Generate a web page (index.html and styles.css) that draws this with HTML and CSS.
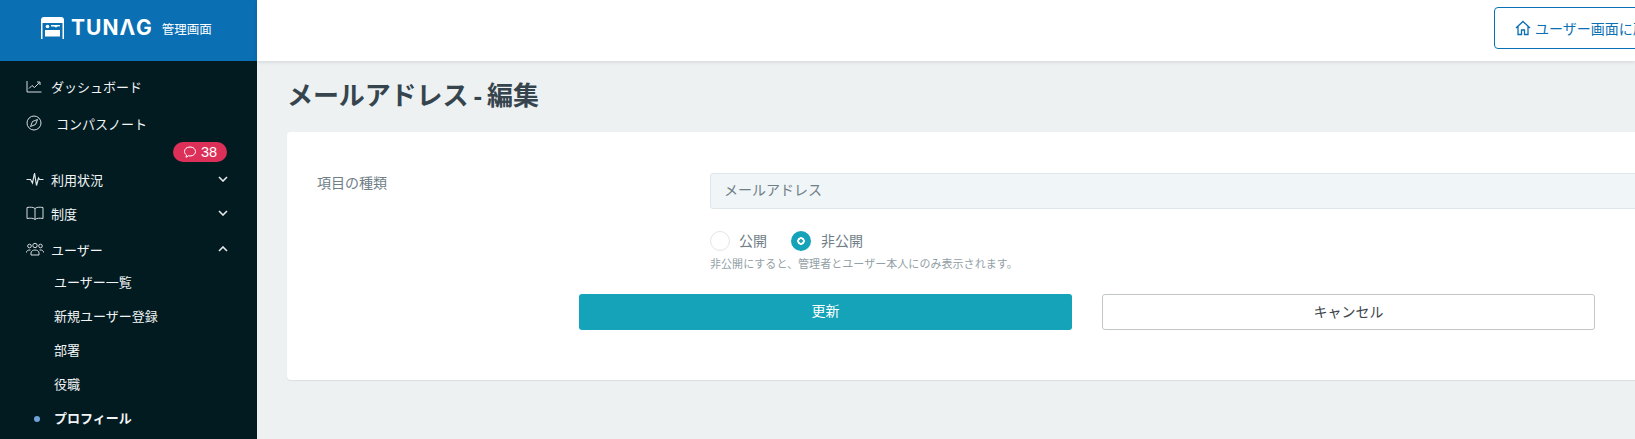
FILE: index.html
```html
<!DOCTYPE html>
<html lang="ja">
<head>
	<title>メールアドレス - 編集</title>
	<meta charset="UTF-8">
	<link rel="stylesheet" href="styles.css">
</head>
<body>
	<div class="layout">
		<aside class="sidebar">
			<div class="brand">
				<svg class="brand-icon" viewBox="0 0 23 22" width="23" height="22">
					<path d="M0 22V3Q0 0 3 0H20Q23 0 23 3V22H21.5V6H1.5V22Z" fill="#fff"/>
					<circle cx="6.5" cy="9.5" r="1.8" fill="#fff"/>
					<path d="M10 8H19V9.5L17 9.2L15 10.5L13 9.5H10Z" fill="#fff"/>
					<rect x="4" y="13" width="15" height="6.5" fill="#fff"/>
				</svg>
				<span class="brand-name">TUNΛG</span>
				<span class="brand-sub">管理画面</span>
			</div>
			<nav class="nav">
				<a class="nav-item">
					<svg class="nav-icon" viewBox="0 0 16 16" fill="none" stroke="#d5dcde" stroke-width="1">
						<path d="M1 3V14H15.5"/>
						<path d="M3 10.5L6 7.5L8.5 9.5L13.5 4.5M11 4H14V7"/>
					</svg>
					<span>ダッシュボード</span>
				</a>
				<a class="nav-item nav-compass">
					<svg class="nav-icon" viewBox="0 0 16 16" fill="none" stroke="#d5dcde" stroke-width="1">
						<circle cx="8" cy="8" r="7"/>
						<path d="M11.5 4.5L9.5 9.5L4.5 11.5L6.5 6.5Z"/>
					</svg>
					<span>コンパスノート</span>
				</a>
				<div class="badge-row">
					<span class="badge">
						<svg viewBox="0 0 14 14" width="14" height="14" fill="none" stroke="#fff" stroke-width="1">
							<path d="M7 2C3.7 2 1.5 4 1.5 6.5C1.5 8 2.3 9.2 3.5 10L3 12.3L5.6 10.8C6 10.9 6.5 11 7 11C10.3 11 12.5 9 12.5 6.5C12.5 4 10.3 2 7 2Z"/>
						</svg>
						38
					</span>
				</div>
				<a class="nav-item">
					<svg class="nav-icon nav-icon-wide" viewBox="0 0 18 16" fill="none" stroke="#e3e8ea" stroke-width="1.2">
						<path d="M0.5 8.5H4.5L6.5 12L8.5 2L10.5 14.5L12.5 7L13.5 8.5H17.5"/>
					</svg>
					<span>利用状況</span>
					<svg class="chevron" viewBox="0 0 10 6" fill="none" stroke="#e6eaeb" stroke-width="1.6"><path d="M1 1L5 5L9 1"/></svg>
				</a>
				<a class="nav-item">
					<svg class="nav-icon nav-icon-wide" viewBox="0 0 18 16" fill="none" stroke="#d5dcde" stroke-width="1">
						<path d="M9 3.5C7.5 2 4 2 1 2.5V13.5C4 13 7.5 13 9 14.5C10.5 13 14 13 17 13.5V2.5C14 2 10.5 2 9 3.5ZM9 3.5V14.5"/>
					</svg>
					<span>制度</span>
					<svg class="chevron" viewBox="0 0 10 6" fill="none" stroke="#e6eaeb" stroke-width="1.6"><path d="M1 1L5 5L9 1"/></svg>
				</a>
				<a class="nav-item nav-users">
					<svg class="nav-icon nav-icon-wide" viewBox="0 0 18 16" fill="none" stroke="#d5dcde" stroke-width="1">
						<circle cx="3.5" cy="5" r="1.8"/>
						<circle cx="9" cy="4.5" r="2.2"/>
						<circle cx="14.5" cy="5" r="1.8"/>
						<path d="M0.5 11.5C0.5 9.5 2 8.8 4.5 9M17.5 11.5C17.5 9.5 16 8.8 13.5 9M5 14V12C5 10 7 9 9 9C11 9 13 10 13 12V14Z"/>
					</svg>
					<span>ユーザー</span>
					<svg class="chevron" viewBox="0 0 10 6" fill="none" stroke="#e6eaeb" stroke-width="1.6"><path d="M1 5L5 1L9 5"/></svg>
				</a>
				<a class="nav-sub">ユーザー一覧</a>
				<a class="nav-sub">新規ユーザー登録</a>
				<a class="nav-sub">部署</a>
				<a class="nav-sub">役職</a>
				<a class="nav-sub current">プロフィール</a>
			</nav>
		</aside>
		<div class="main">
			<header class="topbar">
				<a class="back-btn">
					<svg viewBox="0 0 16 16" width="16" height="16" fill="none" stroke="#0a6fb3" stroke-width="1.3">
						<path d="M1 8L8 1.5L15 8M3 6.5V14.5H6.5V10H9.5V14.5H13V6.5"/>
					</svg>
					ユーザー画面に戻る
				</a>
			</header>
			<div class="content">
				<h1 class="page-title">メールアドレス - 編集</h1>
				<div class="card">
					<div class="form-row">
						<div class="form-label">項目の種類</div>
						<div class="form-control">
							<div class="readonly-input">メールアドレス</div>
							<div class="radios">
								<label class="radio"><span class="radio-mark"></span>公開</label>
								<label class="radio"><span class="radio-mark on"></span>非公開</label>
							</div>
							<p class="help">非公開にすると、管理者とユーザー本人にのみ表示されます。</p>
						</div>
					</div>
					<div class="actions">
						<a class="btn btn-primary">更新</a>
						<a class="btn btn-cancel">キャンセル</a>
					</div>
				</div>
			</div>
		</div>
	</div>
</body>
</html>
```

FILE: styles.css
```css
* {
	box-sizing: border-box;
}
html, body {
	height: 100%;
}
body {
	margin: 0;
	overflow: hidden;
	background: #edf1f2;
	font-family: "Liberation Sans", "Noto Sans CJK JP", sans-serif;
	color: #36454d;
}
.layout {
	display: flex;
	height: 439px;
	overflow: hidden;
}

/* sidebar */
.sidebar {
	width: 257px;
	flex: none;
	background: #021b21;
	color: #f1f4f5;
}
.brand {
	height: 61px;
	background: #0a6fb3;
	color: #fff;
	display: flex;
	align-items: center;
	padding: 0 0 5px 41px;
}
.brand-icon {
	display: block;
}
.brand-name {
	font-family: "Inter", sans-serif;
	font-weight: 700;
	font-size: 21px;
	letter-spacing: 1px;
	margin-left: 7px;
	line-height: 22px;
}
.brand-sub {
	font-size: 12.5px;
	margin-left: 9px;
}
.nav {
	padding-top: 8px;
	font-size: 13px;
}
.nav-item {
	height: 34px;
	display: flex;
	align-items: center;
	padding: 0 29px 0 26px;
}
.nav-compass {
	height: 40px;
}
.nav-compass span {
	margin-left: 5px;
}
.nav-users {
	margin-top: 2px;
}
.nav-icon {
	width: 16px;
	height: 16px;
	margin-right: 9px;
	flex: none;
}
.nav-icon-wide {
	width: 18px;
	margin-right: 7px;
}
.nav-item .chevron {
	width: 10px;
	height: 6px;
	margin-left: auto;
}
.badge-row {
	height: 20px;
	margin-top: -1px;
	display: flex;
	justify-content: flex-end;
	padding-right: 30px;
}
.badge {
	width: 54px;
	height: 20px;
	border-radius: 10px;
	background: #dd3059;
	color: #fff;
	font-size: 14.5px;
	display: flex;
	align-items: center;
	justify-content: center;
	gap: 4px;
}
.nav-sub {
	display: block;
	height: 34px;
	line-height: 34px;
	padding-left: 54px;
	position: relative;
}
.nav-sub.current {
	font-weight: 700;
}
.nav-sub.current::before {
	content: "";
	position: absolute;
	left: 34px;
	top: 14px;
	width: 6px;
	height: 6px;
	border-radius: 50%;
	background: #6ea3d8;
}

/* main column */
.main {
	flex: 1;
	min-width: 0;
}
.topbar {
	height: 61px;
	background: #fff;
	box-shadow: 0 1px 4px rgba(0, 0, 0, 0.12);
	padding: 7px 0 0 1237px;
	white-space: nowrap;
}
.back-btn {
	display: inline-flex;
	align-items: center;
	gap: 4px;
	width: 200px;
	height: 42px;
	padding-left: 20px;
	border: 1px solid #0a6fb3;
	border-radius: 4px;
	color: #0a6fb3;
	font-size: 14px;
}
.content {
	padding: 0 0 0 30px;
}
.page-title {
	margin: 0;
	height: 71px;
	line-height: 71px;
	font-size: 26px;
	font-weight: 700;
	letter-spacing: -0.1px;
	word-spacing: -2px;
	color: #36454d;
}
.card {
	width: 1600px;
	height: 248px;
	background: #fff;
	border-radius: 4px;
	box-shadow: 0 1px 1px rgba(0, 0, 0, 0.08);
	padding-top: 41px;
}
.form-row {
	display: grid;
	grid-template-columns: 393px 1fr;
	padding-left: 30px;
}
.form-label {
	font-size: 14px;
	line-height: 20px;
	color: #6f7e87;
}
.readonly-input {
	height: 36px;
	line-height: 32px;
	padding-left: 13px;
	background: #f0f5f7;
	border: 1px solid #dfe6e9;
	border-radius: 3px;
	font-size: 14px;
	color: #6f7e87;
}
.radios {
	display: flex;
	gap: 24px;
	margin-top: 22px;
}
.radio {
	display: flex;
	align-items: center;
	gap: 9px;
	font-size: 14px;
	line-height: 20px;
	color: #6f7e87;
}
.radio-mark {
	width: 20px;
	height: 20px;
	border-radius: 50%;
	border: 1px solid #dfe6e9;
	background: #fff;
}
.radio-mark.on {
	border: none;
	margin-right: 1px;
	background: radial-gradient(circle, #14a3b8 0 1.5px, #fff 2px 3.5px, #14a3b8 4px);
}
.help {
	margin: 5px 0 0;
	font-size: 11px;
	letter-spacing: 0.05px;
	line-height: 16px;
	color: #939fa6;
}
.actions {
	display: flex;
	gap: 30px;
	margin: 22px 0 0 292px;
}
.btn {
	height: 36px;
	line-height: 34px;
	text-align: center;
	font-size: 14px;
	border-radius: 3px;
}
.btn-primary {
	width: 493px;
	background: #14a3b8;
	color: #fff;
}
.btn-cancel {
	width: 493px;
	background: #fff;
	border: 1px solid #c2c6c8;
	color: #3c4448;
}
```
